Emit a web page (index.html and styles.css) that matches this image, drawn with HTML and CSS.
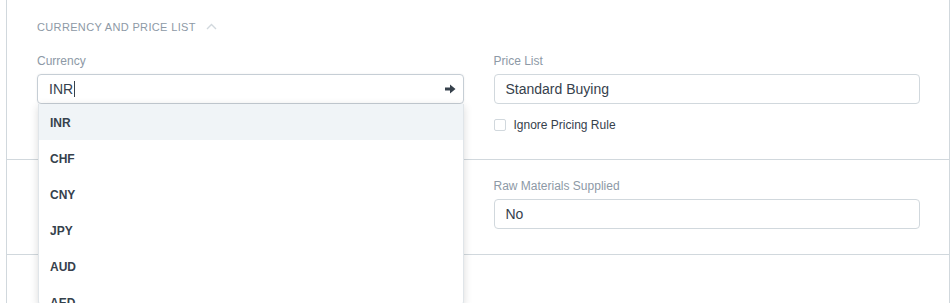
FILE: index.html
```html
<!DOCTYPE html>
<html lang="en">
<head>
    <meta charset="UTF-8">
    <meta name="viewport" content="width=device-width, initial-scale=1.0">
    <title>Purchase Order</title>
    <link rel="stylesheet" href="styles.css">
</head>
<body>
    <div class="form-page">
        <div class="form-section first">
            <div class="section-head">
                <span>Currency and Price List</span>
                <svg class="collapse-icon" width="11" height="7" viewBox="0 0 11 7"><path d="M1 6 L5.5 1.5 L10 6" fill="none" stroke="#d1d8dd" stroke-width="1.4"/></svg>
            </div>
            <div class="section-body">
                <div class="form-column">
                    <div class="control">
                        <div class="control-label">Currency</div>
                        <div class="link-field">
                            <div class="control-input focused">
                                <span>INR</span><span class="caret"></span>
                                <svg class="link-btn" width="11" height="10" viewBox="0 0 11 10"><path d="M0 3.5 H5 V0.5 L10.5 5 L5 9.5 V6.5 H0 Z" fill="#36414c"/></svg>
                            </div>
                            <ul class="awesomplete">
                                <li class="active">INR</li>
                                <li>CHF</li>
                                <li>CNY</li>
                                <li>JPY</li>
                                <li>AUD</li>
                                <li>AED</li>
                            </ul>
                        </div>
                    </div>
                </div>
                <div class="form-column">
                    <div class="control">
                        <div class="control-label">Price List</div>
                        <div class="control-input">Standard Buying</div>
                    </div>
                    <label class="checkbox">
                        <span class="box"></span>
                        <span>Ignore Pricing Rule</span>
                    </label>
                </div>
            </div>
        </div>
        <div class="form-section">
            <div class="section-body">
                <div class="form-column"></div>
                <div class="form-column">
                    <div class="control">
                        <div class="control-label">Raw Materials Supplied</div>
                        <div class="control-input">No</div>
                    </div>
                </div>
            </div>
        </div>
        <div class="form-section last"></div>
    </div>
</body>
</html>
```

FILE: styles.css
```css
body {
    margin: 0;
    background: #fff;
    font-family: "Liberation Sans", Arial, sans-serif;
    color: #36414c;
}
.form-page {
    margin: 0 2px 0 6px;
    border-left: 1px solid #d1d8dd;
    border-right: 1px solid #d1d8dd;
    height: 303px;
}
.form-section {
    border-top: 1px solid #d1d8dd;
    padding: 18px 14px 25px 15px;
}
.form-section.first {
    border-top: none;
    padding-top: 19px;
    height: 159px;
    box-sizing: border-box;
}
.form-section.last {
    padding: 0;
}
.section-head {
    display: flex;
    align-items: center;
    gap: 10px;
    padding: 0 15px;
    height: 16px;
    font-size: 11px;
    letter-spacing: 0.35px;
    text-transform: uppercase;
    color: #8d99a6;
    margin-bottom: 18px;
}
.collapse-icon {
    margin-top: -2px;
}
.section-body {
    display: flex;
}
.form-column {
    flex: 1;
    padding: 0 15px;
}
.control-label {
    font-size: 12px;
    line-height: 16px;
    color: #8d99a6;
    margin-bottom: 5px;
}
.link-field {
    position: relative;
}
.control-input {
    height: 30px;
    box-sizing: border-box;
    border: 1px solid #d1d8dd;
    border-radius: 4px;
    padding: 0 11px;
    display: flex;
    align-items: center;
    font-size: 14px;
    color: #36414c;
}
.focused {
    border-color: #c6ced5;
    box-shadow: 0 0 2px rgba(0, 0, 0, 0.08);
}
.caret {
    display: inline-block;
    width: 1px;
    height: 16px;
    background: #36414c;
    margin-left: 1px;
}
.link-btn {
    margin-left: auto;
    margin-right: -4px;
}
.awesomplete {
    position: absolute;
    top: 30px;
    left: 1px;
    right: 0;
    margin: 0;
    padding: 0;
    list-style: none;
    background: #fff;
    border: 1px solid #e0e5e9;
    border-top: none;
    border-radius: 0 0 4px 4px;
    box-shadow: 0 2px 8px rgba(0, 0, 0, 0.15);
    height: 200px;
    overflow: hidden;
}
.awesomplete li {
    height: 36px;
    line-height: 38px;
    padding: 0 11px;
    font-size: 12px;
    font-weight: bold;
    color: #36414c;
}
.awesomplete li.active {
    background: #f0f4f7;
}
.checkbox {
    display: flex;
    align-items: center;
    gap: 8px;
    margin-top: 14px;
    font-size: 12px;
    color: #36414c;
}
.box {
    width: 10px;
    height: 10px;
    border: 1px solid #d1d8dd;
    border-radius: 2px;
}
```
